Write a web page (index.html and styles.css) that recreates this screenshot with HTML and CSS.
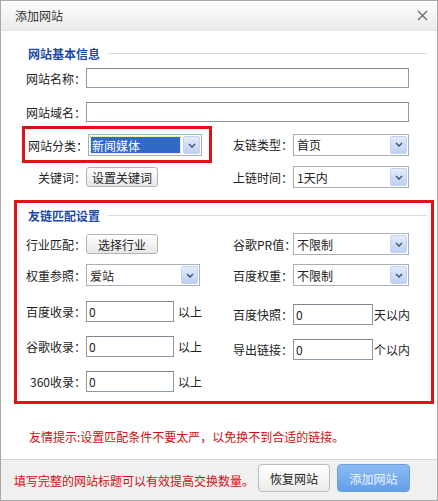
FILE: index.html
```html
<!DOCTYPE html>
<html lang="zh-CN">
<head>
<meta charset="utf-8">
<title>添加网站</title>
<link rel="stylesheet" href="styles.css">
</head>
<body>
<div class="dialog">
  <div class="titlebar">
    <span class="title">添加网站</span>
    <svg class="close" width="11" height="11" viewBox="0 0 11 11"><path d="M1 1L10 10M10 1L1 10" stroke="#6b6b6b" stroke-width="1.3" fill="none"/></svg>
  </div>
  <div class="main">
    <div class="section s1">
      <div class="legend"><span>网站基本信息</span><i></i></div>
      <div class="row r1"><label class="lbl">网站名称：</label><input class="text wide" type="text"></div>
      <div class="row r2"><label class="lbl">网站域名：</label><input class="text wide" type="text"></div>
      <div class="pair r3">
        <div class="hl">
          <label class="lbl">网站分类：</label>
          <div class="select sel-left focus"><span class="val"><b>新闻媒体</b></span><span class="arrow"><svg width="8" height="5" viewBox="0 0 8 5"><path d="M1 1L4 4L7 1" stroke="#445877" stroke-width="1.5" fill="none"/></svg></span></div>
        </div>
        <div class="cell">
          <label class="lbl">友链类型：</label>
          <div class="select sel-right"><span class="val">首页</span><span class="arrow"><svg width="8" height="5" viewBox="0 0 8 5"><path d="M1 1L4 4L7 1" stroke="#445877" stroke-width="1.5" fill="none"/></svg></span></div>
        </div>
      </div>
      <div class="pair r4">
        <div class="cell">
          <label class="lbl">关键词：</label>
          <button class="btn" type="button">设置关键词</button>
        </div>
        <div class="cell">
          <label class="lbl">上链时间：</label>
          <div class="select sel-right"><span class="val">1天内</span><span class="arrow"><svg width="8" height="5" viewBox="0 0 8 5"><path d="M1 1L4 4L7 1" stroke="#445877" stroke-width="1.5" fill="none"/></svg></span></div>
        </div>
      </div>
    </div>

    <div class="section s2">
      <div class="legend"><span>友链匹配设置</span><i></i></div>
      <div class="cols">
        <div class="col">
          <div class="crow"><label class="lbl">行业匹配：</label><button class="btn" type="button">选择行业</button></div>
          <div class="crow g9"><label class="lbl">权重参照：</label><div class="select sel-left"><span class="val">爱站</span><span class="arrow"><svg width="8" height="5" viewBox="0 0 8 5"><path d="M1 1L4 4L7 1" stroke="#445877" stroke-width="1.5" fill="none"/></svg></span></div></div>
          <div class="crow g14"><label class="lbl">百度收录：</label><input class="text num-left" type="text" value="0"><span class="suffix">以上</span></div>
          <div class="crow g13"><label class="lbl">谷歌收录：</label><input class="text num-left" type="text" value="0"><span class="suffix">以上</span></div>
          <div class="crow g13"><label class="lbl">360收录：</label><input class="text num-left" type="text" value="0"><span class="suffix">以上</span></div>
        </div>
        <div class="col">
          <div class="crow"><label class="lbl">谷歌PR值：</label><div class="select sel-right"><span class="val">不限制</span><span class="arrow"><svg width="8" height="5" viewBox="0 0 8 5"><path d="M1 1L4 4L7 1" stroke="#445877" stroke-width="1.5" fill="none"/></svg></span></div></div>
          <div class="crow g9"><label class="lbl">百度权重：</label><div class="select sel-right"><span class="val">不限制</span><span class="arrow"><svg width="8" height="5" viewBox="0 0 8 5"><path d="M1 1L4 4L7 1" stroke="#445877" stroke-width="1.5" fill="none"/></svg></span></div></div>
          <div class="crow g17"><label class="lbl">百度快照：</label><input class="text num-right" type="text" value="0"><span class="suffix tight">天以内</span></div>
          <div class="crow g13"><label class="lbl">导出链接：</label><input class="text num-right" type="text" value="0"><span class="suffix tight">个以内</span></div>
        </div>
      </div>
    </div>

    <p class="tip">友情提示:设置匹配条件不要太严，以免换不到合适的链接。</p>
  </div>
  <div class="footer">
    <span class="note">填写完整的网站标题可以有效提高交换数量。</span>
    <button class="fbtn restore" type="button">恢复网站</button>
    <button class="fbtn add" type="button">添加网站</button>
  </div>
</div>
</body>
</html>
```

FILE: styles.css
```css
* { box-sizing: border-box; }
html, body { margin: 0; padding: 0; background: #fff; }
body {
  font-family: "Noto Sans CJK SC", "Liberation Sans", sans-serif;
  font-size: 12px;
  color: #222;
}
.dialog {
  width: 438px;
  height: 501px;
  border: 1px solid #a8a8a8;
  display: flex;
  flex-direction: column;
  background: #fff;
}
.titlebar {
  flex: none;
  height: 30px;
  display: flex;
  align-items: center;
  justify-content: space-between;
  padding: 0 9px 0 14px;
  background: linear-gradient(#fdfdfd, #ebebeb);
  border-bottom: 1px solid #e3e3e3;
}
.title { color: #333; font-size: 12px; }
.close { display: block; }
.main { flex: 1; padding: 7px 0 0 13px; }
.section {
  width: 420px;
  border: 3px solid transparent;
  padding: 0 4px 0 9px;
}
.s2 {
  border-color: #dc1418;
  margin-top: 9px;
  padding-bottom: 9px;
}
.legend {
  height: 24px;
  display: flex;
  align-items: center;
  padding-left: 2px;
}
.legend span { color: #1c49a8; font-weight: bold; }
.legend i { flex: 1; height: 1px; background: #d9d9d9; margin-left: 8px; }
.row { display: flex; align-items: center; }
.lbl {
  flex: none;
  width: 60px;
  text-align: right;
  white-space: nowrap;
  letter-spacing: 0;
}
.r1 { margin-top: 3px; height: 20px; }
.r2 { margin-top: 14px; height: 20px; }
.text {
  font-family: "Noto Sans CJK SC", "Liberation Sans", sans-serif;
  font-size: 12px;
  color: #222;
  margin: 0;
  padding: 0 2px;
  border: 1px solid #8d98a5;
  border-top-color: #7d8794;
  background: #fff;
  outline: none;
}
.wide { width: 323px; height: 20px; }
.pair {
  display: grid;
  grid-template-columns: 207px 1fr;
  align-items: center;
}
.r3 { margin-top: 4px; }
.r4 { margin-top: 3px; height: 22px; }
.cell { display: flex; align-items: center; }
.hl {
  margin-left: -4px;
  width: 190px;
  border: 3px solid #dc1418;
  padding: 5px 0 4px 3px;
  display: flex;
  align-items: center;
}
.select {
  height: 22px;
  border: 1px solid #a9b0b8;
  background: #fff;
  display: flex;
  align-items: center;
  padding: 1px;
}
.sel-left { width: 114px; }
.sel-right { width: 116px; }
.select .val {
  flex: 1;
  align-self: stretch;
  display: flex;
  align-items: center;
  padding-left: 2px;
  white-space: nowrap;
}
.focus .val { padding: 1px; }
.focus .val b {
  font-weight: normal;
  flex: 1;
  align-self: stretch;
  display: flex;
  align-items: center;
  padding-left: 1px;
  background: #3169c6;
  color: #fff;
  outline: 1px dotted #e8d870;
}
.arrow {
  flex: none;
  width: 17px;
  height: 18px;
  margin-left: 2px;
  border: 1px solid #c3d2f0;
  border-radius: 2px;
  background: linear-gradient(#e4ecfb, #bcd0f4);
  display: flex;
  align-items: center;
  justify-content: center;
}
.arrow svg { display: block; }
.btn {
  font-family: "Noto Sans CJK SC", "Liberation Sans", sans-serif;
  font-size: 12px;
  color: #222;
  width: 72px;
  height: 20px;
  margin: 0;
  padding: 0;
  border: 1px solid #b4b4b4;
  border-radius: 3px;
  background: linear-gradient(#ffffff, #e7e7e7);
}
.cols {
  display: grid;
  grid-template-columns: 207px 1fr;
  align-items: start;
  margin-top: 6px;
}
.col { display: flex; flex-direction: column; }
.crow { display: flex; align-items: center; height: 22px; }
.g9 { margin-top: 9px; }
.g13 { margin-top: 13px; }
.g14 { margin-top: 14px; }
.g17 { margin-top: 17px; }
.num-left { width: 88px; height: 21px; }
.num-right { width: 80px; height: 21px; }
.suffix { margin-left: 4px; white-space: nowrap; }
.suffix.tight { margin-left: 1px; }
.tip {
  margin: 25px 0 0 15px;
  line-height: 16px;
  color: #cc1010;
}
.footer {
  flex: none;
  height: 41px;
  border-top: 1px solid #d4d4d4;
  background: #f0f0f0;
  display: flex;
  align-items: flex-start;
  padding: 4px 27px 0 13px;
}
.note {
  flex: 1;
  align-self: center;
  margin-top: -4px;
  color: #d01010;
  white-space: nowrap;
}
.fbtn {
  font-family: "Noto Sans CJK SC", "Liberation Sans", sans-serif;
  font-size: 12px;
  height: 28px;
  margin: 0;
  padding: 0;
  border-radius: 4px;
}
.restore {
  width: 72px;
  color: #222;
  border: 1px solid #bcbcbc;
  background: linear-gradient(#ffffff, #ebebeb);
}
.add {
  width: 73px;
  margin-left: 7px;
  color: #eef4ff;
  border: 1px solid #6c9fe2;
  background: linear-gradient(#8cbbf3, #639fea);
}
```
